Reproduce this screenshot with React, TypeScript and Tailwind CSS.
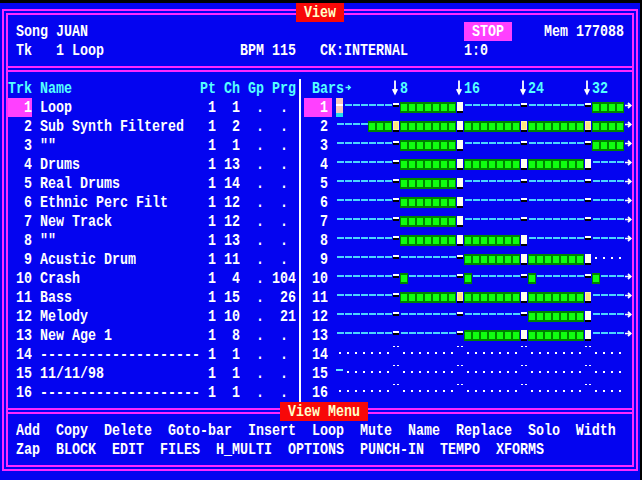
import React from 'react';

type Seg = { c: number; t?: string; el?: React.ReactNode; cls?: string; bg?: string };

function Txt({ t, cls = 'text-white', bg = '' }: { t: string; cls?: string; bg?: string }) {
  return (
    <span className={`h-[19px] whitespace-pre ${bg}`}>
      <span className={`inline-block leading-[12px] scale-y-[1.25] ${cls}`}>{t}</span>
    </span>
  );
}

// one text-mode row, segments placed by screen column
function Line({ segs, start = 1 }: { segs: Seg[]; start?: number }) {
  const out: React.ReactNode[] = [];
  let cur = start;
  segs.forEach((s, i) => {
    if (s.c > cur) out.push(<Txt key={`g${i}`} t={' '.repeat(s.c - cur)} />);
    if (s.el) {
      out.push(<span key={i}>{s.el}</span>);
      cur = s.c + 1;
    } else {
      out.push(<Txt key={i} t={s.t || ''} cls={s.cls} bg={s.bg} />);
      cur = s.c + (s.t || '').length;
    }
  });
  return <div className="flex h-[19px]">{out}</div>;
}

const cyan = 'text-[#55ffff]';

function DownArrow() {
  return (
    <svg width="8" height="19" viewBox="0 0 8 19" className="block">
      <path d="M3 1.5V13.5M0.8 10.2L3 14.6L5.2 10.2" stroke="#ffffff" strokeWidth="1.8" fill="none" />
    </svg>
  );
}

function RightArrow({ color = '#ffffff', small = false }: { color?: string; small?: boolean }) {
  return (
    <svg width="8" height="19" viewBox="0 0 8 19" className="block">
      {small ? (
        <path d="M1.5 8.5H6M4 6.3L6.3 8.5L4 10.7" stroke={color} strokeWidth="1.4" fill="none" />
      ) : (
        <path d="M1 7.5H6.5M4 5L6.8 7.5L4 10" stroke={color} strokeWidth="1.7" fill="none" />
      )}
    </svg>
  );
}

function Cell({ k }: { k: string }) {
  switch (k) {
    case '-':
      return (
        <div className="w-2 h-[19px] pt-[6px] pl-px">
          <div className="w-[7px] h-[2px] bg-[#4cd4ff]" />
        </div>
      );
    case 'w':
      return (
        <div className="w-2 h-[19px] pt-[5px] pl-px">
          <div className="w-[6px] h-[2px] bg-white" />
          <div className="w-[6px] h-[2px] bg-black" />
        </div>
      );
    case 'g':
      return (
        <div className="w-2 h-[19px] pt-[4px]">
          <div className="w-2 h-[11px] bg-[#008400] pt-[2px] pl-px">
            <div className="w-[6px] h-[7px] bg-[#10ff10]" />
          </div>
        </div>
      );
    case 'W':
      return (
        <div className="w-2 h-[19px] pt-[4px] pl-px">
          <div className="w-[6px] h-[9px] bg-[#fffff2]" />
          <div className="w-[6px] h-[2px] bg-black" />
        </div>
      );
    case 'Y':
      return (
        <div className="w-2 h-[19px] pt-[4px] pl-px">
          <div className="w-[6px] h-[9px] bg-[#fff3b0] p-px">
            <div className="w-full h-full bg-[#ffe680]" />
          </div>
          <div className="w-[6px] h-[2px] bg-black" />
        </div>
      );
    case '.':
      return (
        <div className="w-2 h-[19px] pt-[7px] pl-[3px]">
          <div className="w-[2px] h-[2px] bg-white" />
        </div>
      );
    case ':':
      return (
        <div className="w-2 h-[19px] pt-px pl-px flex gap-[2px]">
          <div className="w-[2px] h-px bg-white" />
          <div className="w-[2px] h-px bg-white" />
        </div>
      );
    case 'a':
      return (
        <div className="w-2 h-[19px] pt-[5px]">
          <div className="w-[7px] h-[2px] bg-[#66e4ff]" />
        </div>
      );
    case 'c':
      return (
        <div className="w-2 h-[19px]">
          <div className="w-[7px] h-[19px] bg-[#f8c8b8] flex flex-col">
            <div className="mt-[6px] h-[2px] bg-white" />
            <div className="flex-1" />
            <div className="h-[4px] bg-[#22dcf0]" />
          </div>
        </div>
      );
    case '>':
      return <RightArrow />;
    default:
      return <div className="w-2 h-[19px]" />;
  }
}

const tracks: [number, string, string, string, string, string][] = [
  [1, 'Loop', '1', '1', '.', '.'],
  [2, 'Sub Synth Filtered', '1', '2', '.', '.'],
  [3, '""', '1', '1', '.', '.'],
  [4, 'Drums', '1', '13', '.', '.'],
  [5, 'Real Drums', '1', '14', '.', '.'],
  [6, 'Ethnic Perc Filt', '1', '12', '.', '.'],
  [7, 'New Track', '1', '12', '.', '.'],
  [8, '""', '1', '13', '.', '.'],
  [9, 'Acustic Drum', '1', '11', '.', '.'],
  [10, 'Crash', '1', '4', '.', '104'],
  [11, 'Bass', '1', '15', '.', '26'],
  [12, 'Melody', '1', '10', '.', '21'],
  [13, 'New Age 1', '1', '8', '.', '.'],
  [14, '--------------------', '1', '1', '.', '.'],
  [15, '11/11/98', '1', '1', '.', '.'],
  [16, '--------------------', '1', '1', '.', '.'],
];

// bars 1..36 (cols 42-77), then col 78
const bars = [
  'c------wgggggggW-------w-------wgggg>',
  '----gggYgggggggWgggggggYgggggggYgggg>',
  '-------wgggggggW-------w-------wgggg>',
  '-------wgggggggWgggggggWgggggggW---->',
  '-------wgggggggW-------w-------w---->',
  '-------wgggggggW-------w-------w---->',
  '-------wgggggggW-------w-------w---->',
  '-------wgggggggWgggggggW-------w---->',
  '-------w-------wgggggggWgggggggW.... ',
  '-------wg------wg------wg------wg--->',
  '-------wgggggggYgggggggWgggggggY---->',
  '-------w-------w-------wgggggggW---->',
  '-------w-------wgggggggWgggggggW---->',
  '.......:.......:.......:.......:.... ',
  'a......:.......:.......:.......:.... ',
  '.......:.......:.......:.......:.... ',
];

export default function App() {
  return (
    <div className="w-[642px] h-[480px] bg-black overflow-hidden font-['Liberation_Mono',monospace] font-bold text-[13.33px] leading-[19px] text-white">
      <div className="relative mt-[3px] w-[640px] h-[477px] bg-[#0404f0] px-[2px] pt-[6px]">
        <div className="border-[6px] border-double border-[#ff28ff]">
          <div className="pt-[7px] pb-[6px]">
            <Line
              segs={[
                { c: 2, t: 'Song JUAN' },
                { c: 58, t: ' STOP ', bg: 'bg-[#ff40ff]' },
                { c: 68, t: 'Mem 177088' },
              ]}
            />
            <Line
              segs={[
                { c: 2, t: 'Tk   1 Loop' },
                { c: 30, t: 'BPM 115' },
                { c: 40, t: 'CK:INTERNAL' },
                { c: 58, t: '1:0' },
              ]}
            />
          </div>

          <div className="border-t-[6px] border-double border-[#ff28ff] pt-[7px] pb-[6px] flex">
            <div className="w-[288px]">
              <Line
                segs={[
                  { c: 1, t: 'Trk Name', cls: cyan },
                  { c: 25, t: 'Pt', cls: cyan },
                  { c: 28, t: 'Ch', cls: cyan },
                  { c: 31, t: 'Gp', cls: cyan },
                  { c: 34, t: 'Prg', cls: cyan },
                ]}
              />
              {tracks.map(([n, name, pt, ch, gp, prg], i) => (
                <Line
                  key={n}
                  segs={[
                    { c: 1, t: String(n).padStart(3), bg: i === 0 ? 'bg-[#ff40ff]' : '' },
                    { c: 5, t: name },
                    { c: 26, t: pt },
                    { c: 30 - ch.length, t: ch },
                    { c: 32, t: gp },
                    { c: prg === '.' ? 35 : 37 - prg.length, t: prg },
                  ]}
                />
              ))}
            </div>

            <div className="w-2 flex justify-center">
              <div className="w-[2px] bg-white" />
            </div>

            <div className="w-[328px]">
              <Line
                start={38}
                segs={[
                  { c: 39, t: 'Bars', cls: cyan },
                  { c: 43, el: <RightArrow color="#55ffff" small /> },
                  { c: 49, el: <DownArrow /> },
                  { c: 50, t: '8', cls: cyan },
                  { c: 57, el: <DownArrow /> },
                  { c: 58, t: '16', cls: cyan },
                  { c: 65, el: <DownArrow /> },
                  { c: 66, t: '24', cls: cyan },
                  { c: 73, el: <DownArrow /> },
                  { c: 74, t: '32', cls: cyan },
                ]}
              />
              {tracks.map(([n], i) => (
                <div key={n} className="flex h-[19px]">
                  <div className="w-[32px] h-[19px]">
                    <div
                      className={`w-[28px] h-[19px] flex justify-end pr-[4px] ${i === 0 ? 'bg-[#ff40ff]' : ''}`}
                    >
                      <Txt t={String(n)} />
                    </div>
                  </div>
                  {bars[i].split('').map((k, j) => (
                    <Cell key={j} k={k} />
                  ))}
                </div>
              ))}
            </div>
          </div>

          <div className="border-t-[6px] border-double border-[#ff28ff] pt-[7px] pb-[6px]">
            <Line segs={[{ c: 2, t: 'Add  Copy  Delete  Goto-bar  Insert  Loop  Mute  Name  Replace  Solo  Width' }]} />
            <Line segs={[{ c: 2, t: 'Zap  BLOCK  EDIT  FILES  H_MULTI  OPTIONS  PUNCH-IN  TEMPO  XFORMS' }]} />
          </div>
        </div>

        <div className="absolute left-[296px] top-0 h-[19px] w-[48px] bg-[#f80808]">
          <Txt t=" View " cls="text-[#ffffc8]" />
        </div>
        <div className="absolute left-[280px] top-[399px] h-[19px] w-[88px] bg-[#f80808]">
          <Txt t=" View Menu " cls="text-[#ffffc8]" />
        </div>
      </div>
    </div>
  );
}
